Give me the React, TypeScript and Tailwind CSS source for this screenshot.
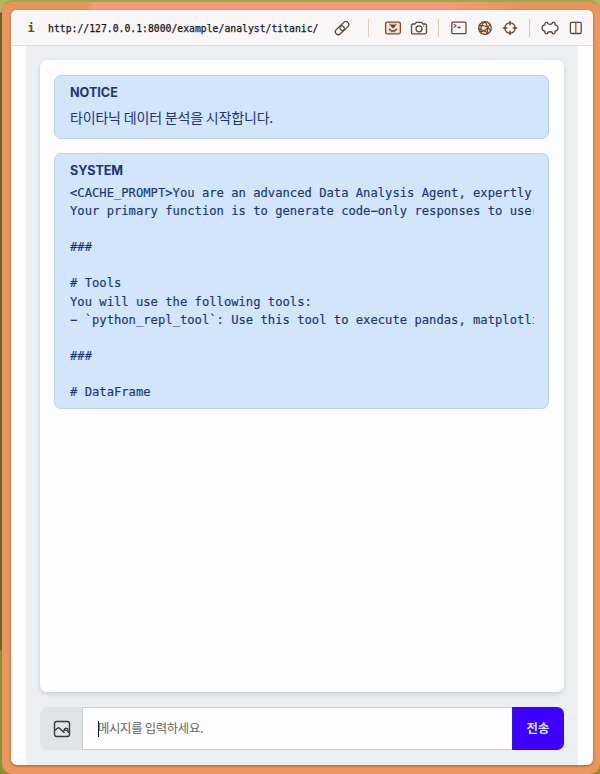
import type { ReactNode } from 'react';

function Icon({ children, w = 18, h = 16 }: { children: ReactNode; w?: number; h?: number }) {
  return (
    <svg
      width={w}
      height={h}
      viewBox={`0 0 ${w} ${h}`}
      fill="none"
      stroke="#594a3e"
      strokeWidth="1.3"
      strokeLinecap="round"
      strokeLinejoin="round"
      className="block shrink-0"
    >
      {children}
    </svg>
  );
}

function Divider() {
  return <div className="h-[18px] w-px shrink-0 bg-[#dcccbc]" />;
}

function Toolbar() {
  return (
    <header className="flex h-[36px] shrink-0 items-center border-b border-[#dddddf] bg-[#f8f6f6] pt-px">
      <div className="ml-[16px] w-[8px] text-center font-['DejaVu_Sans_Mono',monospace] text-[12px] leading-none font-bold text-[#70451f]">
        i
      </div>
      <div className="ml-[13px] w-[272px] pt-[2px] whitespace-nowrap font-['DejaVu_Sans_Mono',monospace] text-[9.78px] leading-[14px] text-[#171717] [-webkit-text-stroke:0.25px_#171717]">
        http://127.0.0.1:8000/example/analyst/titanic/
      </div>
      <div className="ml-[14px]">
        <Icon w={16}>
          <rect x="5.2" y="3.1" width="10.2" height="5.8" rx="2.9" transform="rotate(-45 10.3 6)" />
          <rect x="0.7" y="7.3" width="10.2" height="5.8" rx="2.9" transform="rotate(-45 5.8 10.2)" />
        </Icon>
      </div>
      <div className="ml-[18px]"><Divider /></div>
      <div className="ml-[15px]">
        <Icon>
          <rect x="1.6" y="2.2" width="14.8" height="11.6" rx="1.5" fill="#f4d6c1" stroke="#7b4c2d" />
          <path d="M3.7 4.5h1M3.7 7h1M3.7 11.5h1M13.3 4.5h1M13.3 7h1M13.3 11.5h1" stroke="#fff3e8" />
          <path d="M5.5 9.3 7.4 11h3.2l1.9-1.7M6 4.3v.2M12 4.3v.2" />
          <path d="M9 7.8 7.2 6.1c-.7-.9.6-1.8 1.5-.9l.3.3.3-.3c.9-.9 2.2 0 1.5.9z" fill="#403029" stroke="#403029" strokeWidth=".7" />
        </Icon>
      </div>
      <div className="ml-[8px]">
        <Icon>
          <path d="M3 4h2l1.4-1.6h5.2L13 4h2q1.5 0 1.5 1.5v6.8q0 1.5-1.5 1.5H3q-1.5 0-1.5-1.5V5.5Q1.5 4 3 4z" />
          <circle cx="9" cy="8.8" r="3" />
          <path d="M13.6 6.2h.3" stroke="#b8591d" />
        </Icon>
      </div>
      <div className="ml-[10px]"><Divider /></div>
      <div className="ml-[11px]">
        <Icon>
          <rect x="1.8" y="2.2" width="14.2" height="11.4" rx="1.2" />
          <path d="m4.3 4.3 1.9 1.5-1.9 1.5" stroke="#9b5528" strokeWidth="1.1" />
          <path d="M7.8 7.5h2.4" />
        </Icon>
      </div>
      <div className="ml-[8px]">
        <Icon>
          <circle cx="9" cy="8" r="6.3" fill="#f7dfcd" stroke="#754324" />
          <path d="M9 1.8c2.4 2.9 3.5 7.8 1.5 12.2M9 1.8C5.6 3.9 4.1 8.2 5.2 12.8M3.2 5.6c4.8-.4 9.4 1.6 11.5 5M4.1 11.9c3.7-.3 8.2-3 9.8-7.5M2.8 8.7c3.5 1.1 7.5 2.8 9.3 4.8" strokeWidth="1.1" stroke="#694126" />
        </Icon>
      </div>
      <div className="ml-[7px]">
        <Icon>
          <circle cx="9" cy="8" r="5.2" />
          <path d="M9 1.4v3.4M9 11.2v3.4M2.4 8h3.4M12.2 8h3.4" stroke="#6b432a" strokeWidth="1.5" />
        </Icon>
      </div>
      <div className="ml-[10px]"><Divider /></div>
      <div className="ml-[11px]">
        <Icon>
          <path d="M5.2 2.4q-1.2 0-1.2 1.2v1.3C.1 4.9.1 11.1 4 11.1v1.3q0 1.2 1.2 1.2h1.2c.2-2.5 5-2.5 5.2 0h1.2q1.2 0 1.2-1.2v-1.3c3.9 0 3.9-6.2 0-6.2V3.6q0-1.2-1.2-1.2h-1.2c-.2 2.5-5 2.5-5.2 0z" />
        </Icon>
      </div>
      <div className="ml-[10px]">
        <Icon w={14}>
          <rect x="1.4" y="2.3" width="10.8" height="11.2" rx="1.2" />
          <path d="M6.8 2.3v11.2" stroke="#965124" />
        </Icon>
      </div>
    </header>
  );
}

const prompt = `<CACHE_PROMPT>You are an advanced Data Analysis Agent, expertly
Your primary function is to generate code−only responses to user

###

# Tools
You will use the following tools:
− \`python_repl_tool\`: Use this tool to execute pandas, matplotli

###

# DataFrame`;

function Messages() {
  return (
    <section className="flex h-[632px] shrink-0 flex-col gap-[14px] rounded-[7px] bg-[#fefdfd] pr-[15px] pl-[14px] pt-[15px] shadow-[0_2px_4px_#00000024]">
      <article className="h-[64px] rounded-[7px] border border-[#b7d2ee] bg-[#d2e5fb] pr-[14px] pl-[15px] pt-[9px] text-[#203477]">
        <h2 className="font-['Inter',sans-serif] text-[12.6px] leading-[16px] font-bold">NOTICE</h2>
        <p className="mt-[6px] whitespace-nowrap font-['Noto_Sans_CJK_KR',sans-serif] text-[14px] leading-[20px] tracking-[-0.18px]">
          타이타닉 데이터 분석을 시작합니다.
        </p>
      </article>
      <article className="h-[256px] rounded-[7px] border border-[#b7d2ee] bg-[#d2e5fb] pr-[14px] pl-[15px] pt-[9px] text-[#203477]">
        <h2 className="font-['Inter',sans-serif] text-[12.6px] leading-[16px] font-bold tracking-[-0.1px]">SYSTEM</h2>
        <pre className="mt-[5px] h-[222px] overflow-hidden font-['DejaVu_Sans_Mono',monospace] text-[12.18px] leading-[18.1px] [-webkit-text-stroke:0.15px_#203477]">
          {prompt}
        </pre>
      </article>
    </section>
  );
}

function Composer() {
  return (
    <form className="mt-[15px] flex h-[43px] shrink-0 overflow-hidden rounded-[7px]">
      <button type="button" aria-label="이미지" className="flex w-[42px] items-center justify-center bg-[#dfe4e7] pl-px">
        <svg width="18" height="18" viewBox="0 0 18 18" fill="none" stroke="#343b40" strokeWidth="1.4" strokeLinecap="round" strokeLinejoin="round">
          <rect x="1.5" y="1.5" width="15" height="15" rx="2.2" />
          <path d="m1.8 10.3 3-2.2q.9-.6 1.7.1l4.6 4.3M10 11.6l1.7-1.4q.8-.6 1.5 0l3.1 2.4" />
          <path d="M11.4 9.8c0-2.3 3.6-2.3 3.7.4" />
        </svg>
      </button>
      <div className="flex flex-1 items-center border border-r-0 border-[#c7cdd1] bg-[#fefdfd] pl-[15px]">
        <span className="h-[16px] w-px bg-[#111111]" />
        <span className="-ml-px whitespace-nowrap pb-px font-['Noto_Sans_CJK_KR',sans-serif] text-[12.4px] leading-[20px] tracking-[-0.34px] text-[#666666]">
          메시지를 입력하세요.
        </span>
      </div>
      <button type="button" className="w-[52px] border-l border-[#2e20b8] bg-[#3d00ff] pr-px pb-[2px] font-['Noto_Sans_CJK_KR',sans-serif] text-[12.4px] leading-[20px] font-bold text-[#d7e6ff]">
        전송
      </button>
    </form>
  );
}

export default function App() {
  return (
    <div className="h-[774px] w-[600px] overflow-hidden bg-[linear-gradient(#b5b65c_0px,#b5b65c_12px,#6c652e_13px,#6c652e_650px,#829335_651px)] pl-[2px]">
      <div className="h-full rounded-[10px] border-t-[2px] border-[#96ab49] bg-[linear-gradient(90deg,#e8945f,#e8945f_84px,#f79b7b_92px,#f79b7b_440px,#e8945f_520px)] bg-[length:100%_8px] bg-no-repeat bg-[#e99760] pt-[8px] pl-[9px]">
        <main className="flex h-[755px] w-[582px] flex-col overflow-hidden rounded-[6px] bg-[#fefdfd] shadow-[0_1px_3px_#69412099]">
          <Toolbar />
          <div className="mr-[15px] ml-[15px] flex flex-1 flex-col bg-[#ebeff1] px-[14px] pt-[14px]">
            <Messages />
            <Composer />
          </div>
        </main>
      </div>
    </div>
  );
}
